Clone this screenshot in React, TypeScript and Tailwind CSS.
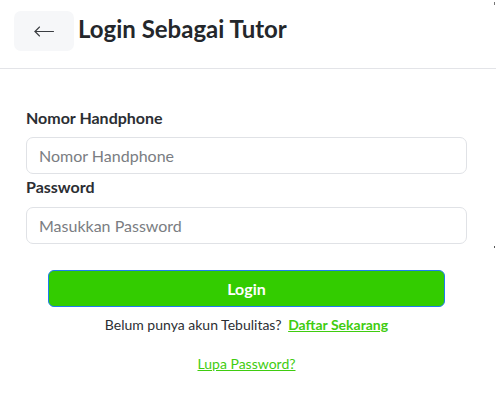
import React from "react";

export default function App() {
  return (
    <div className="relative w-[496px] h-[412px] bg-white" style={{ fontFamily: "Lato, 'Noto Sans', sans-serif" }}>
      <div className="h-[69px] border-b border-[#e3e4e8] flex items-start">
        <button className="mt-[11px] ml-[14px] w-[60px] h-[40px] rounded-[7px] bg-[#f6f7f9] flex items-center justify-center">
          <svg width="20" height="11" viewBox="0 0 20 11" fill="none" stroke="#3a3d42" strokeWidth="1.1" strokeLinecap="round" strokeLinejoin="round">
            <path d="M19.5 5.5H1" />
            <path d="M5.5 1L1 5.5 5.5 10" />
          </svg>
        </button>
        <h1 className="ml-[4px] mt-[13px] text-[24px] leading-[32px] font-bold text-[#24272b]">Login Sebagai Tutor</h1>
      </div>
      <div className="pt-[39px] pl-[26px] pr-[29px] flex flex-col">
        <label className="text-[16px] leading-[20px] font-bold text-[#2b2e33]">Nomor Handphone</label>
        <input
          className="mt-[9px] h-[37px] w-full rounded-[7px] border border-[#e0e2e6] px-[12px] text-[16px] text-[#333] placeholder:text-[#7a7d82] outline-none"
          placeholder="Nomor Handphone"
        />
        <label className="mt-[3px] text-[16px] leading-[20px] font-bold text-[#2b2e33]">Password</label>
        <input
          type="password"
          className="mt-[10px] h-[37px] w-full rounded-[7px] border border-[#e0e2e6] px-[12px] text-[16px] text-[#333] placeholder:text-[#7a7d82] outline-none"
          placeholder="Masukkan Password"
        />
        <button className="mt-[26px] mx-[22px] h-[37px] rounded-[6px] bg-[#33cc00] border border-[#1f7cf0] text-white font-bold text-[16px]">
          Login
        </button>
        <p className="mt-[9px] text-center text-[14px] leading-[18px] text-[#2b2e33]">
          Belum punya akun Tebulitas?{" "}
          <a className="ml-[3px] font-bold text-[#3fcc10] underline">Daftar Sekarang</a>
        </p>
        <p className="mt-[21px] text-center text-[14px] leading-[18px]">
          <a className="text-[#3fcc10] underline">Lupa Password?</a>
        </p>
      </div>
      <div className="absolute right-[1px] top-[2px] w-[1px] h-[3px] bg-[#777]" />
      <div className="absolute right-[1px] top-[246px] w-[1px] h-[2px] bg-[#555]" />
    </div>
  );
}
